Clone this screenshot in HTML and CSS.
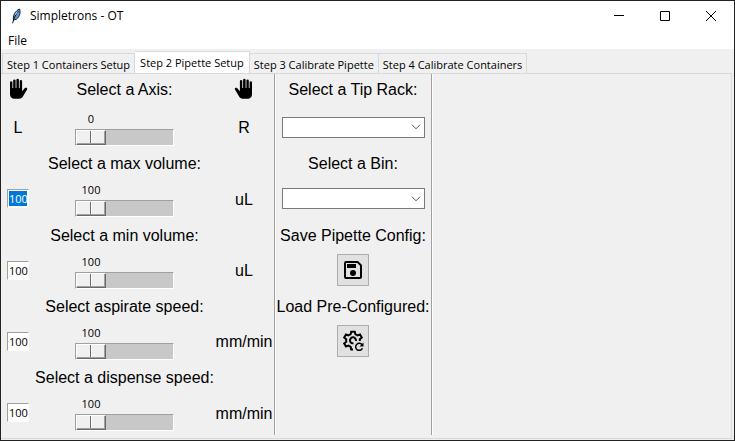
FILE: index.html
```html
<!DOCTYPE html>
<html lang="en">
<head>
<meta charset="utf-8">
<meta name="viewport" content="width=device-width, initial-scale=1">
<title>Simpletrons - OT</title>
<link rel="stylesheet" href="styles.css">
</head>
<body>
<div class="window">
  <header class="titlebar">
    <svg class="feather" width="16" height="16" viewBox="0 0 16 16" aria-hidden="true">
      <path d="M4.500 12.500C3.500 8 6 3 10.500 1c1.300 2.500.5 7.500-3 10.200L4.700 12z" fill="#5b9bd8" stroke="#15202c" stroke-width="1"/>
      <path d="M9.500 3C6.800 6 5 10 3.600 15.300" fill="none" stroke="#0c1016" stroke-width="1"/>
      <path d="M8.200 3.600 6.300 6.800" stroke="#cfe6fa" stroke-width="1"/>
    </svg>
    <h1 class="title">Simpletrons - OT</h1>
    <div class="caption-buttons">
      <button type="button" class="caption" aria-label="Minimize"><svg width="10" height="10" viewBox="0 0 10 10"><path d="M0 4.500h10" stroke="#000"/></svg></button>
      <button type="button" class="caption" aria-label="Maximize"><svg width="10" height="10" viewBox="0 0 10 10"><path d="M.5.5h9v9h-9z" fill="none" stroke="#000"/></svg></button>
      <button type="button" class="caption" aria-label="Close"><svg width="10" height="10" viewBox="0 0 10 10"><path d="M0 0l10 10M10 0L0 10" stroke="#000"/></svg></button>
    </div>
  </header>
  <nav class="menubar"><button type="button" class="menu">File</button></nav>
  <main class="notebook">
    <div class="tabs" role="tablist">
      <button type="button" role="tab" class="tab" aria-selected="false">Step 1 Containers Setup</button>
      <button type="button" role="tab" class="tab tab-active" aria-selected="true">Step 2 Pipette Setup</button>
      <button type="button" role="tab" class="tab" aria-selected="false">Step 3 Calibrate Pipette</button>
      <button type="button" role="tab" class="tab" aria-selected="false">Step 4 Calibrate Containers</button>
    </div>
    <div class="panel" role="tabpanel">
      <form class="rows settings">
        <svg class="hand" width="20" height="22" viewBox="0 0 20 22" aria-hidden="true"><use href="#hand"/></svg>
        <label class="heading" for="axis">Select a Axis:</label>
        <svg class="hand" width="20" height="22" viewBox="0 0 20 22" aria-hidden="true"><g transform="translate(20 0) scale(-1 1)"><path id="hand" d="M2 9V4.500a1.200 1.200 0 0 1 2.400 0V10h.8V2.600a1.200 1.200 0 0 1 2.400 0V10h.8V1.900a1.200 1.200 0 0 1 2.500 0V10h.8V3.200a1.200 1.200 0 0 1 2.400 0V13.200l2.600-3c1.200-1 2.900-.2 2.500 1l-4 6.800c-.9 1.800-2.200 2.800-4.200 2.800H6.500C3.800 20.800 2 19 2 16.500z"/></g></svg>

        <span class="side">L</span>
        <div class="scale"><output for="axis">0</output><input id="axis" class="slider" type="range" min="0" max="1" value="0"></div>
        <span class="side">R</span>

        <label class="heading" for="max-volume">Select a max volume:</label>
        <input class="entry entry-selected" type="text" value="100" aria-label="Max volume">
        <div class="scale"><output for="max-volume">100</output><input id="max-volume" class="slider" type="range" min="100" max="1000" value="100"></div>
        <span class="side">uL</span>

        <label class="heading" for="min-volume">Select a min volume:</label>
        <input class="entry" type="text" value="100" aria-label="Min volume">
        <div class="scale"><output for="min-volume">100</output><input id="min-volume" class="slider" type="range" min="100" max="1000" value="100"></div>
        <span class="side">uL</span>

        <label class="heading" for="aspirate">Select aspirate speed:</label>
        <input class="entry" type="text" value="100" aria-label="Aspirate speed">
        <div class="scale"><output for="aspirate">100</output><input id="aspirate" class="slider" type="range" min="100" max="1000" value="100"></div>
        <span class="side">mm/min</span>

        <label class="heading" for="dispense">Select a dispense speed:</label>
        <input class="entry" type="text" value="100" aria-label="Dispense speed">
        <div class="scale"><output for="dispense">100</output><input id="dispense" class="slider" type="range" min="100" max="1000" value="100"></div>
        <span class="side">mm/min</span>
      </form>
      <form class="rows choices">
        <label for="rack">Select a Tip Rack:</label>
        <div class="combo"><select id="rack"></select><svg width="10" height="6" viewBox="0 0 10 6" aria-hidden="true"><path d="M1 .8l4 4 4-4"/></svg></div>
        <label for="bin">Select a Bin:</label>
        <div class="combo"><select id="bin"></select><svg width="10" height="6" viewBox="0 0 10 6" aria-hidden="true"><path d="M1 .8l4 4 4-4"/></svg></div>
        <label for="save">Save Pipette Config:</label>
        <button type="button" id="save" class="tool">
          <svg width="24" height="24" viewBox="0 0 24 24" aria-hidden="true"><path d="M17 3H5a2 2 0 0 0-2 2v14a2 2 0 0 0 2 2h14a2 2 0 0 0 2-2V7zM19 19H5V5h11.200L19 7.800zM12 12a3 3 0 1 0 0 6 3 3 0 0 0 0-6zM6 6h9v4H6z"/></svg>
        </button>
        <label for="load">Load Pre-Configured:</label>
        <button type="button" id="load" class="tool">
          <svg width="24" height="24" viewBox="0 0 24 24" fill="none" stroke="#000" stroke-width="2" aria-hidden="true">
            <path d="M12 20.500H10.200L9.700 17.800 7.500 16.600 5 17.500 3.200 14.400 5.200 12.700V10.300L3.200 8.600 5 5.500 7.500 6.400 9.700 5.200 10.200 2.700H13.800L14.300 5.200 16.500 6.400 19 5.500 20.800 8.600 18.800 10.300V12"/>
            <path d="M12.500 14.300A3 3 0 1 1 14.900 12"/>
            <path d="M21 15.800A3.500 3.500 0 1 0 21.400 19.200" stroke-width="1.500"/>
            <path d="M22.500 13.500v4h-4z" fill="#000" stroke="none"/>
          </svg>
        </button>
      </form>
    </div>
  </main>
</div>
</body>
</html>
```
FILE: styles.css
```css
* { box-sizing: border-box; }
body {
  margin: 0;
  font: 12px/16px "Open Sans", "Noto Sans", sans-serif;
  color: #000;
  background: #f0f0f0;
}
button, input, select { font: inherit; color: inherit; margin: 0; }
button { padding: 0; border: 0; background: none; }

.window {
  display: flex;
  flex-direction: column;
  min-height: 100vh;
  border: 1px solid #222;
}
.titlebar {
  display: flex;
  align-items: center;
  height: 30px;
  padding-left: 8px;
  gap: 5px;
  background: #fff;
}
.title { margin: 0; font-size: 12px; font-weight: 400; }
.caption-buttons { display: flex; margin-left: auto; }
.caption { display: grid; place-items: center; width: 46px; height: 30px; }
.menubar { height: 18px; padding: 2px 7px 0; background: #fff; }
.menu { display: block; }

.notebook { display: flex; flex: 1; flex-direction: column; padding: 2px 2px 1px 0; }
.tabs { display: flex; align-items: flex-end; padding-left: 1px; }
.tab {
  height: 20px;
  padding: 2px 4px 0;
  border: 1px solid #d9d9d9;
  border-bottom: 0;
  font-size: 11px;
  white-space: nowrap;
}
.tab + .tab { border-left: 0; }
.tab.tab-active { height: 22px; padding: 0 5px; background: #fff; }
.panel {
  display: flex;
  flex: 1;
  border: 1px solid #d9d9d9;
  border-left: 0;
  font: 16px/20px "Liberation Sans", Arial, sans-serif;
}

.rows {
  display: grid;
  grid-template-rows: 30px 46px 26px 45px 27px 44px 27px 44px 27px 45px;
  align-items: center;
  justify-items: center;
  align-self: flex-start;
  border-right: 1px solid #a0a0a0;
  box-shadow: 1px 0 #fff;
  white-space: nowrap;
}
.settings { grid-template-columns: 34px 179px 60px; }
.choices { width: 157px; }
.rows label, .side { padding-top: 2px; }
.heading { grid-column: 2; }
.scale { display: grid; grid-column: 2; width: 99px; }
.scale output {
  width: 32px;
  font: 11px/20px "Open Sans", "Noto Sans", sans-serif;
  text-align: center;
}
.slider {
  appearance: none;
  width: 99px;
  height: 17px;
  border: 1px solid;
  border-color: #a0a0a0 #fff #fff #a0a0a0;
  background: #c8c8c8;
}
.slider::-webkit-slider-thumb {
  appearance: none;
  width: 30px;
  height: 15px;
  border: 1px solid;
  border-color: #fff #696969 #696969 #fff;
  background: linear-gradient(90deg, #f0f0f0 13px, #696969 13px 14px, #fff 14px 15px, #f0f0f0 15px);
  box-shadow: inset -1px -1px #a0a0a0;
}
.entry {
  grid-column: 1;
  width: 22px;
  height: 19px;
  padding: 1px 0 1px 1px;
  border: 1px solid;
  border-color: #a0a0a0 #fff #fff #a0a0a0;
  background: #fff;
  font: 11px/15px "Open Sans", "Noto Sans", sans-serif;
}
.entry-selected { color: #fff; background: #0078d7 content-box; box-shadow: inset 0 0 0 1px #fff; }

.combo { display: grid; align-items: center; width: 143px; }
.combo > * { grid-area: 1 / 1; }
.combo select {
  appearance: none;
  width: 100%;
  height: 21px;
  border: 1px solid #7a7a7a;
  border-radius: 0;
  background: #fff;
}
.combo svg {
  justify-self: end;
  margin-right: 4px;
  fill: none;
  stroke: #555;
  pointer-events: none;
}
.tool {
  display: grid;
  place-items: center;
  width: 32px;
  height: 32px;
  border: 1px solid #adadad;
  background: #e1e1e1;
}
```
